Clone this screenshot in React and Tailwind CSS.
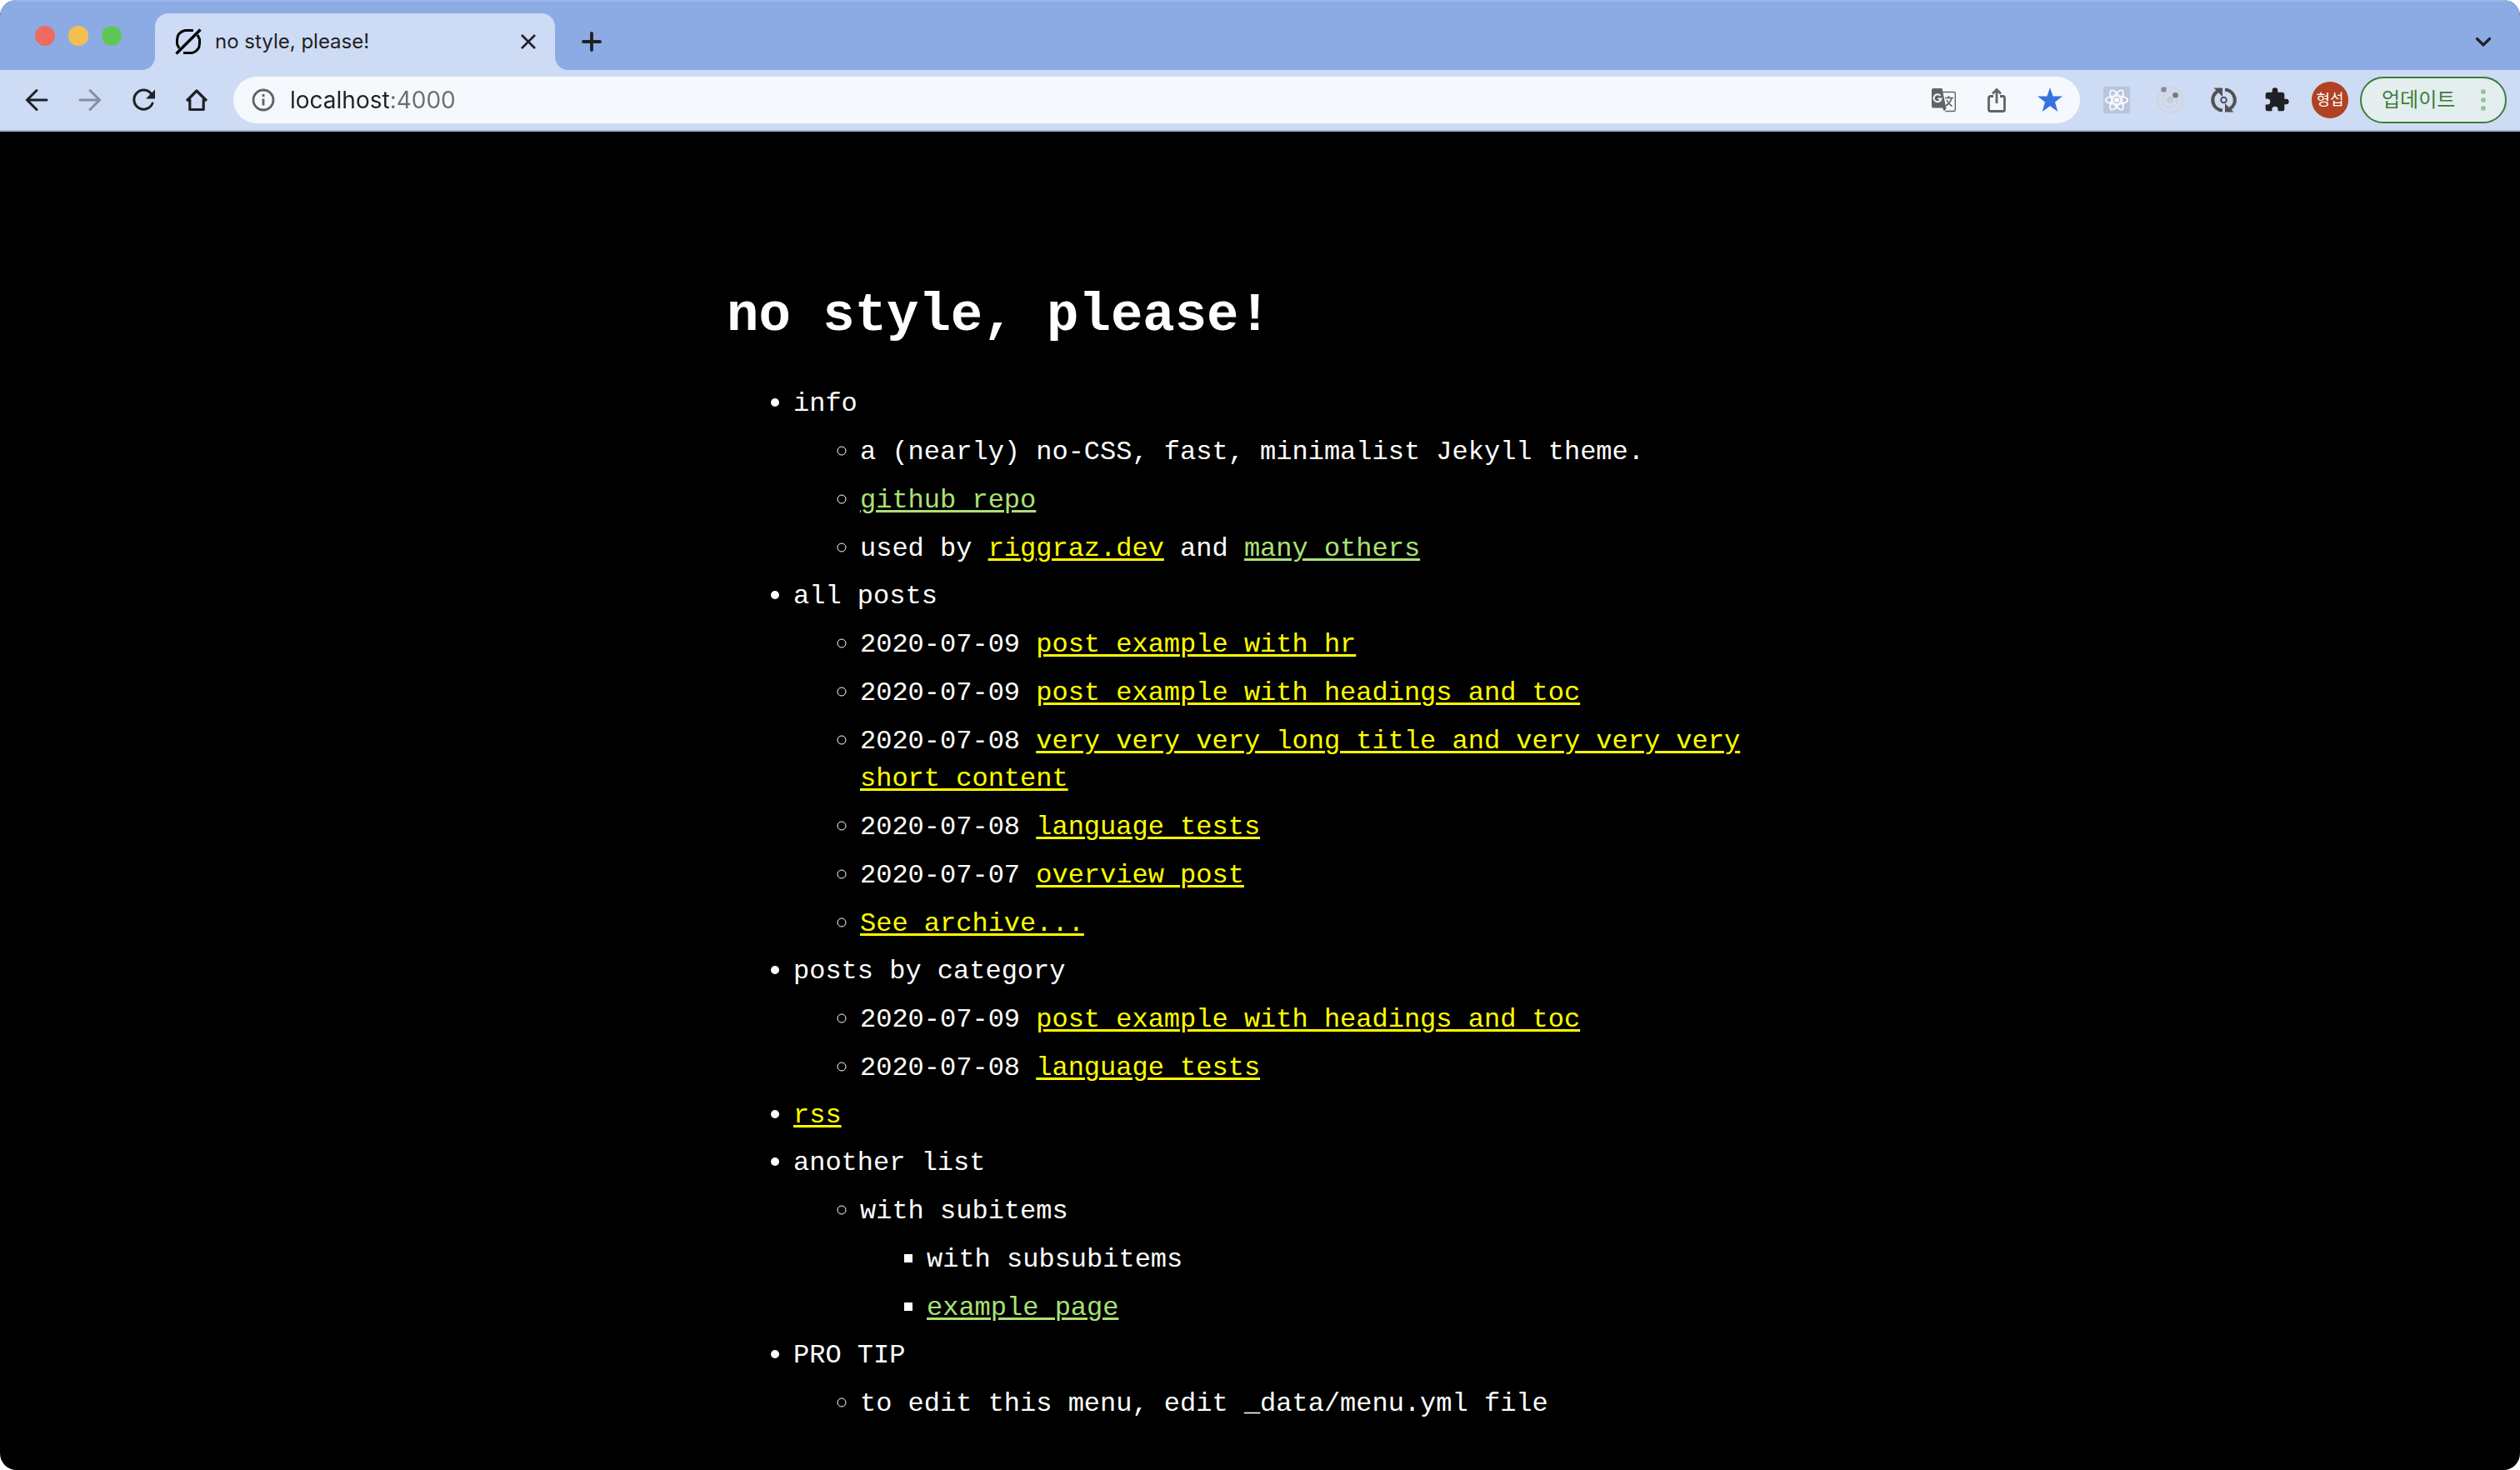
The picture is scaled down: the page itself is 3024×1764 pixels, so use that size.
import React from "react";

const menu = [
  {
    parts: ["info"],
    items: [
      { parts: ["a (nearly) no-CSS, fast, minimalist Jekyll theme."] },
      { parts: [{ text: "github repo", visited: true }] },
      { parts: ["used by ", { text: "riggraz.dev" }, " and ", { text: "many others", visited: true }] },
    ],
  },
  {
    parts: ["all posts"],
    items: [
      { parts: ["2020-07-09 ", { text: "post example with hr" }] },
      { parts: ["2020-07-09 ", { text: "post example with headings and toc" }] },
      { parts: ["2020-07-08 ", { text: "very very very long title and very very very short content" }] },
      { parts: ["2020-07-08 ", { text: "language tests" }] },
      { parts: ["2020-07-07 ", { text: "overview post" }] },
      { parts: [{ text: "See archive..." }] },
    ],
  },
  {
    parts: ["posts by category"],
    items: [
      { parts: ["2020-07-09 ", { text: "post example with headings and toc" }] },
      { parts: ["2020-07-08 ", { text: "language tests" }] },
    ],
  },
  { parts: [{ text: "rss" }] },
  {
    parts: ["another list"],
    items: [
      {
        parts: ["with subitems"],
        items: [{ parts: ["with subsubitems"] }, { parts: [{ text: "example page", visited: true }] }],
      },
    ],
  },
  { parts: ["PRO TIP"], items: [{ parts: ["to edit this menu, edit _data/menu.yml file"] }] },
];

const listStyles = ["list-disc", "list-[circle]", "list-[square]"];

function MenuList({ items, level = 0 }) {
  return (
    <ul className={`${listStyles[level]} pl-20`}>
      {items.map((item, i) => (
        <li key={i} className={level === 0 ? "mt-3 marker:text-4xl" : "mt-[13px] marker:text-4xl"}>
          {item.parts.map((p, j) =>
            typeof p === "string" ? (
              p
            ) : (
              <a
                key={j}
                href="#"
                className={`underline decoration-3 underline-offset-3 ${p.visited ? "text-[#abe177]" : "text-[#ffff00]"}`}
              >
                {p.text}
              </a>
            )
          )}
          {item.items && <MenuList items={item.items} level={level + 1} />}
        </li>
      ))}
    </ul>
  );
}

function IconButton({ label, className = "", children }) {
  return (
    <button type="button" aria-label={label} className={`flex size-8 shrink-0 items-center justify-center ${className}`}>
      {children}
    </button>
  );
}

function Svg({ children, ...rest }) {
  return (
    <svg viewBox="0 0 32 32" className="size-8" fill="none" {...rest}>
      {children}
    </svg>
  );
}

function TabStrip() {
  return (
    <div className="flex h-[84px] items-end border-t-2 border-[#9ab6ea] bg-[#8cabe5]">
      <div className="flex gap-4 self-start pt-[29px] pl-[42px]">
        <button type="button" aria-label="Close window" className="size-6 rounded-full bg-[#ed6b60]" />
        <button type="button" aria-label="Minimize window" className="size-6 rounded-full bg-[#f5bf4f]" />
        <button type="button" aria-label="Zoom window" className="size-6 rounded-full bg-[#62c655]" />
      </div>
      <svg viewBox="0 0 16 16" className="ml-6 size-4 text-[#cddbf5]" fill="currentColor">
        <path d="M16 0v16H0C9 16 16 9 16 0z" />
      </svg>
      <div className="flex h-[68px] w-[480px] items-center rounded-t-2xl bg-[#cddbf5] pr-4 pl-6">
        <svg viewBox="0 0 32 32" className="size-8 shrink-0" fill="none" stroke="#000" strokeWidth="3">
          <path d="M22 2.500H12Q2.500 5 2.500 14v5l2.500 5M10 29.500h10.500Q29.500 27 29.500 18v-5L27 8" />
          <path d="M1.500 30.500 30.500 1.500" strokeWidth="3.400" />
        </svg>
        <span className="ml-4 grow text-2xl text-[#1f2124]">no style, please!</span>
        <IconButton label="Close tab">
          <Svg stroke="#1f2124" strokeWidth="2.600">
            <path d="m8 8 16 16M24 8 8 24" />
          </Svg>
        </IconButton>
      </div>
      <svg viewBox="0 0 16 16" className="size-4 text-[#cddbf5]" fill="currentColor">
        <path d="M0 0v16h16C7 16 0 9 0 0z" />
      </svg>
      <IconButton label="New tab" className="mb-[18px] ml-3">
        <Svg stroke="#1f2124" strokeWidth="3.800" strokeLinecap="round">
          <path d="M16 6v20M6 16h20" />
        </Svg>
      </IconButton>
      <IconButton label="Search tabs" className="mr-7 mb-[18px] ml-auto">
        <Svg stroke="#1f2124" strokeWidth="3.200" strokeLinecap="round">
          <path d="m8.500 12.500 7.500 7.500 7.500-7.500" />
        </Svg>
      </IconButton>
    </div>
  );
}

function Toolbar() {
  return (
    <div className="flex h-[74px] items-center border-b-2 border-[#a5b0c5] bg-[#cddbf5] pr-4 pl-7">
      <div className="flex gap-8">
        <IconButton label="Back">
          <Svg stroke="#1f2124" strokeWidth="3" strokeLinecap="round">
            <path d="M28 16H4.500M16 4.500 4.500 16 16 27.500" />
          </Svg>
        </IconButton>
        <IconButton label="Forward">
          <Svg stroke="#868f9f" strokeWidth="3" strokeLinecap="round">
            <path d="M4 16h23.500M16 4.500 27.500 16 16 27.500" />
          </Svg>
        </IconButton>
        <IconButton label="Reload">
          <Svg>
            <path d="M27 20A11.500 11.500 0 1 1 25 8" stroke="#1f2124" strokeWidth="3" strokeLinecap="round" />
            <path d="M30 3.500v11H19z" fill="#1f2124" />
          </Svg>
        </IconButton>
        <IconButton label="Home">
          <Svg stroke="#1f2124" strokeWidth="3.200">
            <path d="M4 17 16 5l12 12M7.800 15v12.500h16.400V15" strokeLinejoin="round" />
          </Svg>
        </IconButton>
      </div>
      <div className="ml-7 flex h-14 grow items-center rounded-full bg-[#f5f9fd] pr-5 pl-5">
        <IconButton label="View site information">
          <Svg stroke="#5f6367" strokeWidth="2.800">
            <circle cx="16" cy="16" r="12" />
            <path d="M16 14.500v8M16 9v3" />
          </Svg>
        </IconButton>
        <input
          aria-label="Address"
          defaultValue="localhost:4000"
          className="ml-4 h-9 min-w-0 grow bg-[linear-gradient(90deg,#1f2124_121px,#6a6e73_121px)] bg-clip-text text-[28px] leading-9 text-transparent outline-none"
        />
        <div className="flex gap-8">
          <IconButton label="Translate this page">
            <Svg>
              <path d="M14.500 6.500H29a1.300 1.300 0 0 1 1.300 1.300v20.400a1.300 1.300 0 0 1-1.300 1.300H18.500" stroke="#606367" strokeWidth="1.400" />
              <path d="M4 2h10.500l4.800 23.500H4a2 2 0 0 1-2-2V4a2 2 0 0 1 2-2zM15 25.500h5l-3 4z" fill="#606367" />
              <path d="M12.500 10.800a4.500 4.500 0 1 0 1 3.700H9.500" stroke="#f5f9fd" strokeWidth="2" />
              <path d="M18 13.500h10M22.500 11v2.500M26 13.500c-1 4-3.500 7-7 9.500M20 16c1.500 3 3.500 5.500 6.500 7.500" stroke="#606367" strokeWidth="1.600" />
            </Svg>
          </IconButton>
          <IconButton label="Share this page">
            <Svg stroke="#606367" strokeWidth="2.800">
              <path d="M12 11.500H8.500a2 2 0 0 0-2 2v14a2 2 0 0 0 2 2h15a2 2 0 0 0 2-2v-14a2 2 0 0 0-2-2H20M16 20V4.500M11 8.500l5-5 5 5" />
            </Svg>
          </IconButton>
          <IconButton label="Edit bookmark">
            <Svg fill="#3871e0">
              <path d="m16 1 3.600 10.500H31l-9 6.900L25.300 30 16 23.200 6.700 30 10 18.400l-9-6.900h11.400z" />
            </Svg>
          </IconButton>
        </div>
      </div>
      <div className="ml-7 flex gap-8">
        <IconButton label="React Developer Tools">
          <Svg>
            <rect width="32" height="32" rx="2" fill="#b8c5df" />
            <g stroke="#fff" strokeWidth="1.700">
              <ellipse cx="16" cy="16" rx="13.200" ry="5" />
              <ellipse cx="16" cy="16" rx="13.200" ry="5" transform="rotate(60 16 16)" />
              <ellipse cx="16" cy="16" rx="13.200" ry="5" transform="rotate(120 16 16)" />
            </g>
            <circle cx="16" cy="16" r="2.800" fill="#fff" />
          </Svg>
        </IconButton>
        <IconButton label="Orbit extension">
          <Svg>
            <g stroke="#d3d3d3" strokeWidth="1.600">
              <circle cx="16" cy="16" r="15" />
              <circle cx="16" cy="16" r="9" />
            </g>
            <circle cx="16" cy="16" r="4.300" fill="#cbcccd" />
            <circle cx="8.500" cy="3.500" r="3.300" fill="#8c8c8c" />
            <circle cx="22.500" cy="10.300" r="3.300" fill="#757575" />
          </Svg>
        </IconButton>
        <IconButton label="Refresh extension">
          <Svg>
            <g stroke="#525252" strokeWidth="4.200">
              <path d="M15 28.500A12.500 12.500 0 0 1 9 5.500" />
              <path d="M18 3.500A12.500 12.500 0 0 1 24 26.500" />
            </g>
            <path d="M4.500 1.500h10.500V12zM28.500 30.500H18V20z" fill="#525252" />
            <circle cx="16.500" cy="16" r="3.300" stroke="#525252" strokeWidth="2" />
          </Svg>
        </IconButton>
        <IconButton label="Extensions">
          <Svg viewBox="0 0 24 24" fill="#1f2124">
            <path d="M20.500 11H19V7c0-1.100-.9-2-2-2h-4V3.500a2.500 2.500 0 0 0-5 0V5H4c-1.100 0-2 .9-2 2v3.800h1.500a2.700 2.700 0 0 1 0 5.400H2V20c0 1.100.9 2 2 2h3.800v-1.500a2.700 2.700 0 0 1 5.400 0V22H17c1.100 0 2-.9 2-2v-4h1.500a2.500 2.500 0 0 0 0-5z" />
          </Svg>
        </IconButton>
      </div>
      <button
        type="button"
        className="ml-[26px] flex size-11 shrink-0 items-center justify-center rounded-full bg-[#b04122] text-lg whitespace-nowrap text-white"
      >
        형섭
      </button>
      <button
        type="button"
        className="ml-3.5 flex h-14 w-44 shrink-0 items-center justify-between rounded-full border-2 border-[#3a7d3e] bg-[#e5eeee] pr-[23px] pl-6 text-2xl whitespace-nowrap text-[#3a7d3e]"
      >
        업데이트
        <span className="flex flex-col gap-1">
          <span className="size-1.5 rounded-full bg-[#91c998]" />
          <span className="size-1.5 rounded-full bg-[#91c998]" />
          <span className="size-1.5 rounded-full bg-[#91c998]" />
        </span>
      </button>
    </div>
  );
}

export default function App() {
  return (
    <div className="min-h-screen bg-white">
      <div className="flex min-h-screen flex-col overflow-hidden rounded-[20px] bg-black">
        <header className="font-[Inter,'Noto_Sans_CJK_KR',sans-serif]">
          <TabStrip />
          <Toolbar />
        </header>
        <main className="mx-auto w-full max-w-[1280px] pt-44 font-['Courier_New','Liberation_Mono',monospace] text-[32px] leading-[45px] text-white">
          <h1 className="mb-[38px] text-[64px] leading-[90px] font-bold">no style, please!</h1>
          <MenuList items={menu} />
        </main>
      </div>
    </div>
  );
}
